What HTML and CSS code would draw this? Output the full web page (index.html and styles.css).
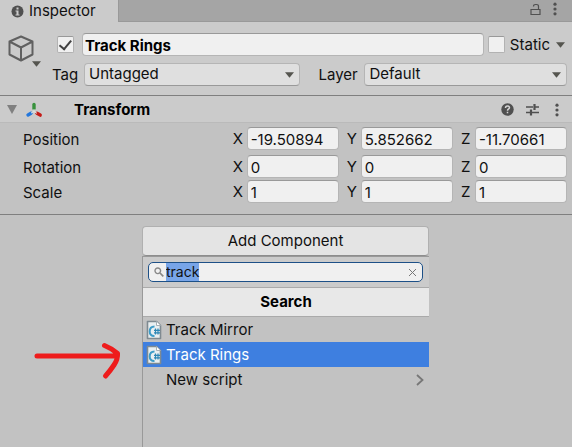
FILE: index.html
```html
<!DOCTYPE html>
<html lang="en">
<head>
<meta charset="utf-8">
<title>Inspector</title>
<link rel="stylesheet" href="styles.css">
</head>
<body>
<svg class="defs" aria-hidden="true">
  <defs>
    <symbol id="caret" viewBox="0 0 10 6"><path d="M0 0h10L5 6z" fill="#55554f"/></symbol>
    <symbol id="dots" viewBox="0 0 4 14"><g fill="#505050"><circle cx="2" cy="2.2" r="1.6"/><circle cx="2" cy="7" r="1.6"/><circle cx="2" cy="11.8" r="1.6"/></g></symbol>
    <symbol id="script" viewBox="0 0 16 20">
      <path d="M1.5 1.5h9l4 4v13h-13z" fill="#e9eff1" stroke="#7f8a91" stroke-width="1.6" stroke-linejoin="round"/>
      <path d="M10.5 1.5v4h4" fill="#fff" stroke="#a5b0b6"/>
      <path d="M8.500 6.500C5 6.500 3.700 9 3.700 11.500s1.500 4.700 4.800 4.500" fill="none" stroke="#3e9cc7" stroke-width="2"/>
      <path d="M9.500 8.500v6M12 8.500v6M8 10.300h6M8 12.800h6" stroke="#2d87b5" stroke-width="1.200"/>
    </symbol>
  </defs>
</svg>

<header class="tabs">
  <div class="tab">
    <svg width="13" height="13" viewBox="0 0 13 13"><circle cx="6.500" cy="6.500" r="6" fill="#505050"/><path d="M5.500 2.500h2v2h-2zM4.500 5.500h3v4h1v1h-4v-1h1v-3h-1z" fill="#cbcbcb"/></svg>
    <span>Inspector</span>
  </div>
  <div class="tab-tools">
    <button class="icon-button" aria-label="Lock"><svg width="11" height="13" viewBox="0 0 11 13"><path d="M1 6.500h9v5H1zM8.500 6.500v-3q0-2-2-2H5.500q-2 0-2 2" fill="none" stroke="#505050" stroke-width="1.200"/></svg></button>
    <button class="icon-button" aria-label="Tab menu"><svg width="4" height="14"><use href="#dots"/></svg></button>
  </div>
</header>

<section class="object">
  <div class="object-icon">
    <svg width="26" height="27" viewBox="0 0 26 27"><path d="M13 1.500l11.500 5v13L13 25.500l-11.500-6v-13zM1.500 6.500L13 12.500l11.500-6M13 12.500v13" fill="none" stroke="#606060" stroke-width="2" stroke-linejoin="round"/></svg>
    <svg class="object-caret" width="9" height="6"><use href="#caret"/></svg>
  </div>
  <div class="object-fields">
    <div class="name-row">
      <input class="check" type="checkbox" aria-label="Active" checked>
      <input class="field name" type="text" aria-label="Name" value="Track Rings">
      <label class="static"><input class="check" type="checkbox">Static</label>
      <svg width="9" height="6"><use href="#caret"/></svg>
    </div>
    <div class="tag-row">
      <label for="tag">Tag</label>
      <div class="select tag"><select id="tag"><option>Untagged</option></select><svg width="9" height="6"><use href="#caret"/></svg></div>
      <label class="layer-label" for="layer">Layer</label>
      <div class="select layer"><select id="layer"><option>Default</option></select><svg width="9" height="6"><use href="#caret"/></svg></div>
    </div>
  </div>
</section>

<section class="component">
  <div class="component-head">
    <svg width="10" height="9" viewBox="0 0 10 9"><path d="M0 0h10L5 9z" fill="#808080"/></svg>
    <svg class="axes" width="18" height="16" viewBox="0 0 18 16"><g fill="none" stroke-linecap="round" stroke-width="3.400"><path d="M9 2.500v4" stroke="#38923d"/><path d="M3 13l3-1.700" stroke="#2477dc"/><path d="M12 11.300l3.200 1.800" stroke="#c51b17"/></g><path d="M9 7v2.500L6 11M9 9.500l3 1.800" fill="none" stroke="#dce5e2"/></svg>
    <h2>Transform</h2>
    <div class="component-tools">
      <button class="icon-button" aria-label="Help"><svg width="13" height="13" viewBox="0 0 13 13"><circle cx="6.500" cy="6.500" r="6.200" fill="#505050"/><path d="M4.500 5q0-2 2-2t2 1.700q0 .8-1 1.300t-1 1.700M6.500 8.800v1.500" fill="none" stroke="#d4d4d4" stroke-width="1.500"/></svg></button>
      <button class="icon-button" aria-label="Presets"><svg width="13" height="13" viewBox="0 0 13 13"><path d="M0 4h7M9 4h4M0 9.500h4M6 9.500h7" fill="none" stroke="#505050" stroke-width="1.600"/><path d="M8.500 1v6M5 6.500v6" stroke="#505050" stroke-width="2.200"/></svg></button>
      <button class="icon-button menu" aria-label="Component menu"><svg width="4" height="14"><use href="#dots"/></svg></button>
    </div>
  </div>
  <div class="component-body">
    <div class="vector first">
      <span>Position</span>
      <label>X<input class="field" type="text" value="-19.50894"></label>
      <label>Y<input class="field" type="text" value="5.852662"></label>
      <label>Z<input class="field" type="text" value="-11.70661"></label>
    </div>
    <div class="vector">
      <span>Rotation</span>
      <label>X<input class="field" type="text" value="0"></label>
      <label>Y<input class="field" type="text" value="0"></label>
      <label>Z<input class="field" type="text" value="0"></label>
    </div>
    <div class="vector">
      <span>Scale</span>
      <label>X<input class="field" type="text" value="1"></label>
      <label>Y<input class="field" type="text" value="1"></label>
      <label>Z<input class="field" type="text" value="1"></label>
    </div>
  </div>
</section>

<main class="add">
  <button class="add-button">Add Component</button>
  <div class="picker">
    <div class="search-row">
      <div class="search">
        <svg width="10" height="10" viewBox="0 0 10 10"><circle cx="3.800" cy="3.800" r="2.800" fill="none" stroke="#888" stroke-width="1.400"/><path d="M6 6l3.300 3.300" stroke="#888" stroke-width="1.700"/></svg>
        <input id="query" type="text" aria-label="Search components" value="track">
        <button class="icon-button" aria-label="Clear"><svg width="9" height="9" viewBox="0 0 9 9"><path d="M1 1l7 7M8 1L1 8" stroke="#777"/></svg></button>
      </div>
    </div>
    <h3>Search</h3>
    <button class="item"><svg width="16" height="20"><use href="#script"/></svg><span>Track Mirror</span></button>
    <button class="item selected"><svg width="16" height="20"><use href="#script"/></svg><span>Track Rings</span></button>
    <button class="item plain"><span>New script</span><svg width="8" height="12" viewBox="0 0 8 12"><path d="M1 1l5.500 5L1 11" fill="none" stroke="#777" stroke-width="1.800"/></svg></button>
  </div>
</main>

<svg class="pointer" width="90" height="42" viewBox="0 0 90 42" aria-hidden="true"><path d="M4 16H82M71.500 5.500Q78 8 84.500 13.500Q85 19 81 25Q77 31 72.500 36" fill="none" stroke="#ee1c1c" stroke-width="5" stroke-linecap="round" stroke-linejoin="round"/></svg>
<script src="select.js"></script>
</body>
</html>
```
FILE: styles.css
```css
* {
  box-sizing: border-box;
}

body {
  margin: 0;
  min-height: 100vh;
  display: flex;
  flex-direction: column;
  position: relative;
  background: #c2c2c2;
  color: #101010;
  font: 15px/20px Inter, "Liberation Sans", sans-serif;
}

svg {
  display: block;
  flex: none;
}

.defs {
  position: absolute;
  width: 0;
  height: 0;
}

h2, h3 {
  margin: 0;
  font-size: 15px;
  font-weight: 700;
  color: #000;
}

button, input, select {
  margin: 0;
  font: inherit;
  color: inherit;
}

.icon-button {
  padding: 0;
  border: 0;
  background: none;
}

.tabs {
  display: flex;
  height: 22px;
  background: #a5a5a5;
}

.tab {
  display: flex;
  align-items: center;
  gap: 5px;
  width: 118px;
  padding-left: 11px;
  background: #cbcbcb;
}

.tab-tools {
  flex: 1;
  display: flex;
  justify-content: flex-end;
  align-items: center;
  gap: 12px;
  padding: 0 15px 3px 0;
  border-bottom: 1px solid #999;
  border-left: 1px solid #999;
}

.object {
  display: flex;
  padding: 11px 5px 9px 8px;
  background: #cbcbcb;
  border-bottom: 1px solid #7f7f7f;
}

.object-icon {
  position: relative;
  width: 44px;
  padding-top: 2px;
}

.object-caret {
  position: absolute;
  left: 24px;
  top: 28px;
}

.object-fields {
  flex: 1;
  display: flex;
  flex-direction: column;
  gap: 7px;
}

.name-row, .tag-row {
  display: flex;
  align-items: center;
}

.name-row {
  padding-left: 5px;
}

.check {
  appearance: none;
  width: 17px;
  height: 17px;
  border: 1px solid #b2b2b2;
  border-top-color: #999;
  border-radius: 2px;
  background: #f0f0f0;
}

.check:checked {
  display: grid;
  place-items: center;
}

.check:checked::before {
  content: "";
  width: 5px;
  height: 10px;
  border: solid #404040;
  border-width: 0 2px 2px 0;
  transform: rotate(40deg) translate(-1px, -1px);
}

.field {
  width: 0;
  min-width: 0;
  flex: 1;
  height: 23px;
  padding: 1px 3px 0;
  border: 1px solid #b5b5b5;
  border-top-color: #999;
  border-radius: 4px;
  background: #f0f0f0;
  outline: 0;
}

.name {
  margin: 0 4px 0 8px;
  padding: 1px 2px 0;
  font-weight: 700;
  color: #000;
}

.static {
  display: flex;
  align-items: center;
  gap: 5px;
  margin-right: 6px;
}

.name-row > svg {
  margin-right: 2px;
}

.tag-row > label {
  padding-top: 1px;
}

.tag-row > label:first-child {
  width: 32px;
}

.layer-label {
  width: 46px;
  margin-left: 18px;
}

.select {
  position: relative;
  flex: 217 1 0;
}

.layer {
  flex-grow: 203;
}

.select select {
  appearance: none;
  display: block;
  width: 100%;
  height: 23px;
  padding: 0 20px 2px 4px;
  border: 1px solid #b5b5b5;
  border-bottom-color: #999;
  border-radius: 4px;
  background: #dfdfdf;
}

.select svg {
  position: absolute;
  right: 6px;
  top: 9px;
  pointer-events: none;
}

.component {
  border-bottom: 1px solid #7f7f7f;
}

.component-head {
  display: flex;
  align-items: center;
  height: 27px;
  padding: 1px 13px 0 7px;
  background: #cbcbcb;
  border-bottom: 1px solid #bababa;
}

.axes {
  margin: 0 31px 0 8px;
}

.component-tools {
  display: flex;
  align-items: center;
  gap: 12px;
  margin-left: auto;
}

.menu {
  padding-left: 4px;
}

.component-body {
  display: flex;
  flex-direction: column;
  gap: 2px;
  padding: 4px 5px 11px 23px;
}

.vector {
  display: grid;
  grid-template-columns: 19fr 10fr 10fr 10fr;
  column-gap: 8px;
  align-items: center;
}

.vector span {
  padding-top: 2px;
}

.first {
  margin-bottom: 3px;
}

.vector label {
  display: grid;
  grid-template-columns: 14px 1fr;
  align-items: center;
  line-height: 22px;
}

.vector .field {
  width: 100%;
}

.add {
  flex: 1;
  display: flex;
  flex-direction: column;
  margin: 0 25% 0 calc(25% - 1px);
  padding-top: 11px;
}

.add-button {
  height: 30px;
  padding: 0 0 1px;
  border: 1px solid #b0b0b0;
  border-bottom-color: #8d8d8d;
  border-radius: 4px;
  background: #e4e4e4;
}

.picker {
  flex: 1;
  border-top: 1px solid #999;
  border-left: 1px solid #999;
}

.search-row {
  padding: 5px 6px 5px 5px;
  background: #cbcbcb;
}

.search {
  display: flex;
  align-items: center;
  height: 20px;
  padding: 0 5px;
  border: 1px solid #1d5087;
  border-radius: 5px;
  background: #f0f0f0;
}

.search input {
  flex: 1;
  min-width: 0;
  height: 18px;
  margin-left: 2px;
  padding: 0;
  border: 0;
  outline: 0;
  background: none;
  font-size: 14px;
  line-height: 18px;
  caret-color: transparent;
}

.search input::selection {
  background: #78a5e8;
  color: #101010;
}

h3 {
  height: 30px;
  border: solid #aaa;
  border-width: 1px 0;
  background: #e8e8e8;
  line-height: 28px;
  text-align: center;
}

.item {
  display: flex;
  align-items: center;
  gap: 4px;
  width: 100%;
  height: 25px;
  padding: 0 5px 0 3px;
  border: 0;
  background: none;
  text-align: left;
}

.item span {
  flex: 1;
}

.selected {
  background: #3e7fe0;
  color: #fff;
}

.plain {
  padding-left: 23px;
}

.pointer {
  position: absolute;
  left: 33px;
  top: 340px;
  pointer-events: none;
}
```
FILE: select.js
```js
const query = document.getElementById("query");
query.focus();
query.select();
```
